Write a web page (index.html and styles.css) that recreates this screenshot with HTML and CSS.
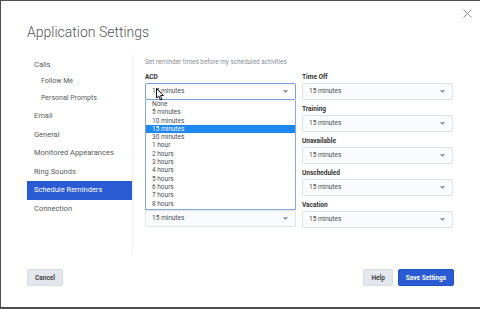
FILE: index.html
```html
<!DOCTYPE html>
<html lang="en">
<head>
    <meta charset="UTF-8">
    <title>Application Settings</title>
    <link rel="stylesheet" href="styles.css">
</head>
<body>
    <div class="dialog">
        <div class="dialog-header">
            <h1>Application Settings</h1>
            <svg class="close" width="9" height="9" viewBox="0 0 9 9"><path d="M0.5 0.5 L8.5 8.5 M8.5 0.5 L0.5 8.5" stroke="#8a8a8a" stroke-width="1"/></svg>
        </div>

        <div class="dialog-body">
            <ul class="nav">
                <li class="nav-item">Calls</li>
                <li class="nav-item sub">Follow Me</li>
                <li class="nav-item sub">Personal Prompts</li>
                <li class="nav-item">Email</li>
                <li class="nav-item">General</li>
                <li class="nav-item">Monitored Appearances</li>
                <li class="nav-item">Ring Sounds</li>
                <li class="nav-item active">Schedule Reminders</li>
                <li class="nav-item">Connection</li>
            </ul>

            <div class="content">
                <p class="hint">Set reminder times before my scheduled activities</p>
                <div class="columns">
                    <div class="column">
                        <div class="field">
                            <label>ACD</label>
                            <div class="select focused">15 minutes<span class="chev"></span></div>
                            <ul class="options">
                                <li>None</li>
                                <li>5 minutes</li>
                                <li>10 minutes</li>
                                <li class="hl">15 minutes</li>
                                <li>30 minutes</li>
                                <li>1 hour</li>
                                <li>2 hours</li>
                                <li>3 hours</li>
                                <li>4 hours</li>
                                <li>5 hours</li>
                                <li>6 hours</li>
                                <li>7 hours</li>
                                <li>8 hours</li>
                            </ul>
                            <div class="select">15 minutes<span class="chev"></span></div>
                            <svg class="cursor" width="9" height="13" viewBox="0 0 9 13"><path d="M0.5 0.5 L0.5 10 L2.8 8 L4.5 12 L6 11.3 L4.4 7.6 L7.5 7.5 Z" fill="#fff" stroke="#000" stroke-width="0.9" stroke-linejoin="round"/></svg>
                        </div>
                    </div>
                    <div class="column">
                        <div class="field">
                            <label>Time Off</label>
                            <div class="select">15 minutes<span class="chev"></span></div>
                        </div>
                        <div class="field">
                            <label>Training</label>
                            <div class="select">15 minutes<span class="chev"></span></div>
                        </div>
                        <div class="field">
                            <label>Unavailable</label>
                            <div class="select">15 minutes<span class="chev"></span></div>
                        </div>
                        <div class="field">
                            <label>Unscheduled</label>
                            <div class="select">15 minutes<span class="chev"></span></div>
                        </div>
                        <div class="field">
                            <label>Vacation</label>
                            <div class="select">15 minutes<span class="chev"></span></div>
                        </div>
                    </div>
                </div>
            </div>
        </div>

        <div class="dialog-footer">
            <button class="btn">Cancel</button>
            <div class="right">
                <button class="btn">Help</button>
                <button class="btn primary">Save Settings</button>
            </div>
        </div>
    </div>
</body>
</html>
```

FILE: styles.css
```css
body {
    margin: 0;
    background-color: #4d4f52;
    font-family: Roboto, 'Liberation Sans', sans-serif;
    color: #444;
}

.dialog {
    position: relative;
    background-color: #fff;
    height: 306px;
    margin: 1px 0 2px 1px;
    box-sizing: border-box;
}

.dialog-header {
    padding: 22px 0 0 26px;
    height: 54px;
    box-sizing: border-box;
}

.dialog-header h1 {
    margin: 0;
    font-size: 14px;
    font-weight: 300;
    color: #555;
    line-height: 19px;
}

.close {
    position: absolute;
    top: 8px;
    right: 8px;
}

.dialog-body {
    display: flex;
    height: 200px;
}

.nav {
    list-style: none;
    margin: 0;
    padding: 1px 0 0 0;
    margin-left: 26px;
    width: 105px;
    border-right: 1px solid #eef0f2;
}

.nav-item {
    font-size: 7.5px;
    height: 18.5px;
    line-height: 18.5px;
    padding-left: 7px;
    color: #5a5d61;
}

.nav-item.sub {
    height: 17px;
    line-height: 17px;
    padding-left: 14px;
    font-size: 7px;
}

.nav-item:first-child {
    height: 17px;
    line-height: 17px;
}

.nav-item.active {
    background-color: #2a5bd2;
    color: #fff;
}

.content {
    padding: 3px 0 0 12px;
}

.hint {
    margin: 0 0 7px 0;
    font-size: 6.4px;
    line-height: 8px;
    color: #8a8f96;
}

.columns {
    display: grid;
    grid-template-columns: 151px 151px;
    gap: 6px;
}

.field {
    position: relative;
    margin-bottom: 5px;
}

.field label {
    display: block;
    font-size: 6.5px;
    font-weight: 700;
    color: #333;
    line-height: 9px;
    margin-bottom: 1px;
}

.select {
    position: relative;
    height: 17px;
    box-sizing: border-box;
    border: 1px solid #e1e5ea;
    border-radius: 2px;
    background-color: #fafbfc;
    font-size: 6.5px;
    line-height: 15px;
    padding-left: 6px;
    color: #4a4d52;
}

.select.focused {
    border-color: #7d9fdc;
    background-color: #fff;
}

.chev {
    position: absolute;
    right: 8px;
    top: 5px;
    width: 2px;
    height: 2px;
    border-right: 1px solid #666;
    border-bottom: 1px solid #666;
    transform: rotate(45deg);
}

.options {
    list-style: none;
    margin: 0;
    padding: 0;
    height: 110px;
    box-sizing: border-box;
    border: 1px solid #8aa8df;
    border-top: none;
    background-color: #fff;
}

.options li {
    font-size: 6.5px;
    height: 8.3px;
    line-height: 8.3px;
    padding-left: 6px;
    color: #4a4d52;
}

.options li.hl {
    background-color: #1e88f0;
    color: #fff;
}

.cursor {
    position: absolute;
    left: 11px;
    top: 15px;
}

.dialog-footer {
    display: flex;
    justify-content: space-between;
    align-items: center;
    padding: 14px 26px 0 26px;
}

.right {
    display: flex;
    gap: 5px;
}

.btn {
    font-family: Roboto, 'Liberation Sans', sans-serif;
    font-size: 6.5px;
    font-weight: 700;
    height: 17px;
    padding: 0 7px;
    border: 1px solid #d8dde4;
    border-radius: 2px;
    background-color: #e4e8ee;
    color: #444;
}

.btn.primary {
    background-color: #2a5bd2;
    border-color: #2352c4;
    color: #fff;
}
```
